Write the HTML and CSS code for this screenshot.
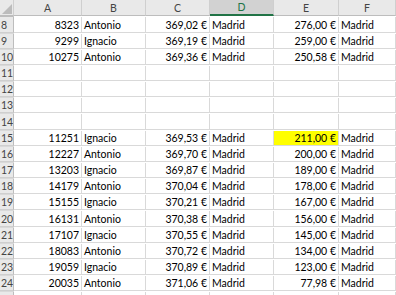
FILE: index.html
```html
<!DOCTYPE html>
<html>
<head>
<meta charset="utf-8">
<link rel="stylesheet" href="styles.css">
</head>
<body>
<div class="sheet">
  <div class="row head">
    <div class="corner"><span class="tri"></span></div>
    <div class="ch">A</div><div class="ch">B</div><div class="ch">C</div><div class="ch sel">D</div><div class="ch">E</div><div class="ch">F</div><div class="ch"></div>
  </div>
  <div class="row tall"><div class="rh">8</div><div class="c n">8323</div><div class="c">Antonio</div><div class="c n">369,02 €</div><div class="c">Madrid</div><div class="c n">276,00 €</div><div class="c">Madrid</div><div class="c"></div></div>
  <div class="row"><div class="rh">9</div><div class="c n">9299</div><div class="c">Ignacio</div><div class="c n">369,19 €</div><div class="c">Madrid</div><div class="c n">259,00 €</div><div class="c">Madrid</div><div class="c"></div></div>
  <div class="row"><div class="rh">10</div><div class="c n">10275</div><div class="c">Antonio</div><div class="c n">369,36 €</div><div class="c">Madrid</div><div class="c n">250,58 €</div><div class="c">Madrid</div><div class="c"></div></div>
  <div class="row"><div class="rh">11</div><div class="c"></div><div class="c"></div><div class="c"></div><div class="c"></div><div class="c"></div><div class="c"></div><div class="c"></div></div>
  <div class="row"><div class="rh">12</div><div class="c"></div><div class="c"></div><div class="c"></div><div class="c"></div><div class="c"></div><div class="c"></div><div class="c"></div></div>
  <div class="row"><div class="rh">13</div><div class="c"></div><div class="c"></div><div class="c"></div><div class="c"></div><div class="c"></div><div class="c"></div><div class="c"></div></div>
  <div class="row tall"><div class="rh">14</div><div class="c"></div><div class="c"></div><div class="c"></div><div class="c"></div><div class="c"></div><div class="c"></div><div class="c"></div></div>
  <div class="row"><div class="rh">15</div><div class="c n">11251</div><div class="c">Ignacio</div><div class="c n">369,53 €</div><div class="c">Madrid</div><div class="c n hl">211,00 €</div><div class="c">Madrid</div><div class="c"></div></div>
  <div class="row"><div class="rh">16</div><div class="c n">12227</div><div class="c">Antonio</div><div class="c n">369,70 €</div><div class="c">Madrid</div><div class="c n">200,00 €</div><div class="c">Madrid</div><div class="c"></div></div>
  <div class="row"><div class="rh">17</div><div class="c n">13203</div><div class="c">Ignacio</div><div class="c n">369,87 €</div><div class="c">Madrid</div><div class="c n">189,00 €</div><div class="c">Madrid</div><div class="c"></div></div>
  <div class="row"><div class="rh">18</div><div class="c n">14179</div><div class="c">Antonio</div><div class="c n">370,04 €</div><div class="c">Madrid</div><div class="c n">178,00 €</div><div class="c">Madrid</div><div class="c"></div></div>
  <div class="row"><div class="rh">19</div><div class="c n">15155</div><div class="c">Ignacio</div><div class="c n">370,21 €</div><div class="c">Madrid</div><div class="c n">167,00 €</div><div class="c">Madrid</div><div class="c"></div></div>
  <div class="row tall"><div class="rh">20</div><div class="c n">16131</div><div class="c">Antonio</div><div class="c n">370,38 €</div><div class="c">Madrid</div><div class="c n">156,00 €</div><div class="c">Madrid</div><div class="c"></div></div>
  <div class="row"><div class="rh">21</div><div class="c n">17107</div><div class="c">Ignacio</div><div class="c n">370,55 €</div><div class="c">Madrid</div><div class="c n">145,00 €</div><div class="c">Madrid</div><div class="c"></div></div>
  <div class="row"><div class="rh">22</div><div class="c n">18083</div><div class="c">Antonio</div><div class="c n">370,72 €</div><div class="c">Madrid</div><div class="c n">134,00 €</div><div class="c">Madrid</div><div class="c"></div></div>
  <div class="row"><div class="rh">23</div><div class="c n">19059</div><div class="c">Ignacio</div><div class="c n">370,89 €</div><div class="c">Madrid</div><div class="c n">123,00 €</div><div class="c">Madrid</div><div class="c"></div></div>
  <div class="row"><div class="rh">24</div><div class="c n">20035</div><div class="c">Antonio</div><div class="c n">371,06 €</div><div class="c">Madrid</div><div class="c n">77,98 €</div><div class="c">Madrid</div><div class="c"></div></div>
  <div class="row"><div class="rh"></div><div class="c"></div><div class="c"></div><div class="c"></div><div class="c"></div><div class="c"></div><div class="c"></div><div class="c"></div></div>
</div>
</body>
</html>
```
FILE: styles.css
```css
html, body {
  margin: 0;
  padding: 0;
  background: #ffffff;
  overflow: hidden;
}
.sheet {
  font-family: Lato, "Liberation Sans", sans-serif;
  font-size: 10.5px;
  color: #000;
  width: 396px;
}
.row {
  display: grid;
  grid-template-columns: 14px 68px 64px 64px 64px 65px 1fr;
  height: 16px;
}
.row.tall { height: 17px; }
.row.head { height: 17px; }
.row > div {
  box-sizing: border-box;
  border-right: 1px solid #d9d9d9;
  border-bottom: 1px solid #d9d9d9;
  white-space: nowrap;
  overflow: hidden;
  display: flex;
  align-items: flex-end;
  line-height: 14px;
  padding: 0 2px 0 2px;
}
.c.n { justify-content: flex-end; }
.c.hl { background: #ffff00; }
.rh {
  background: #e9e9e9;
  color: #444;
  border-right-color: #bdbdbd !important;
  border-bottom-color: #cfcfcf !important;
  padding-left: 1px !important;
}
.head > div {
  background: #e9e9e9;
  color: #444;
  justify-content: center;
  border-bottom-color: #bdbdbd;
  border-right-color: #cfcfcf;
}
.head > .ch.sel {
  background: #d2d2d2;
  color: #217346;
  border-bottom: 2px solid #217346;
}
.corner {
  position: relative;
}
.tri {
  position: absolute;
  right: 1px;
  bottom: 1px;
  width: 0;
  height: 0;
  border-left: 10px solid transparent;
  border-bottom: 10px solid #bcbcbc;
}
```
